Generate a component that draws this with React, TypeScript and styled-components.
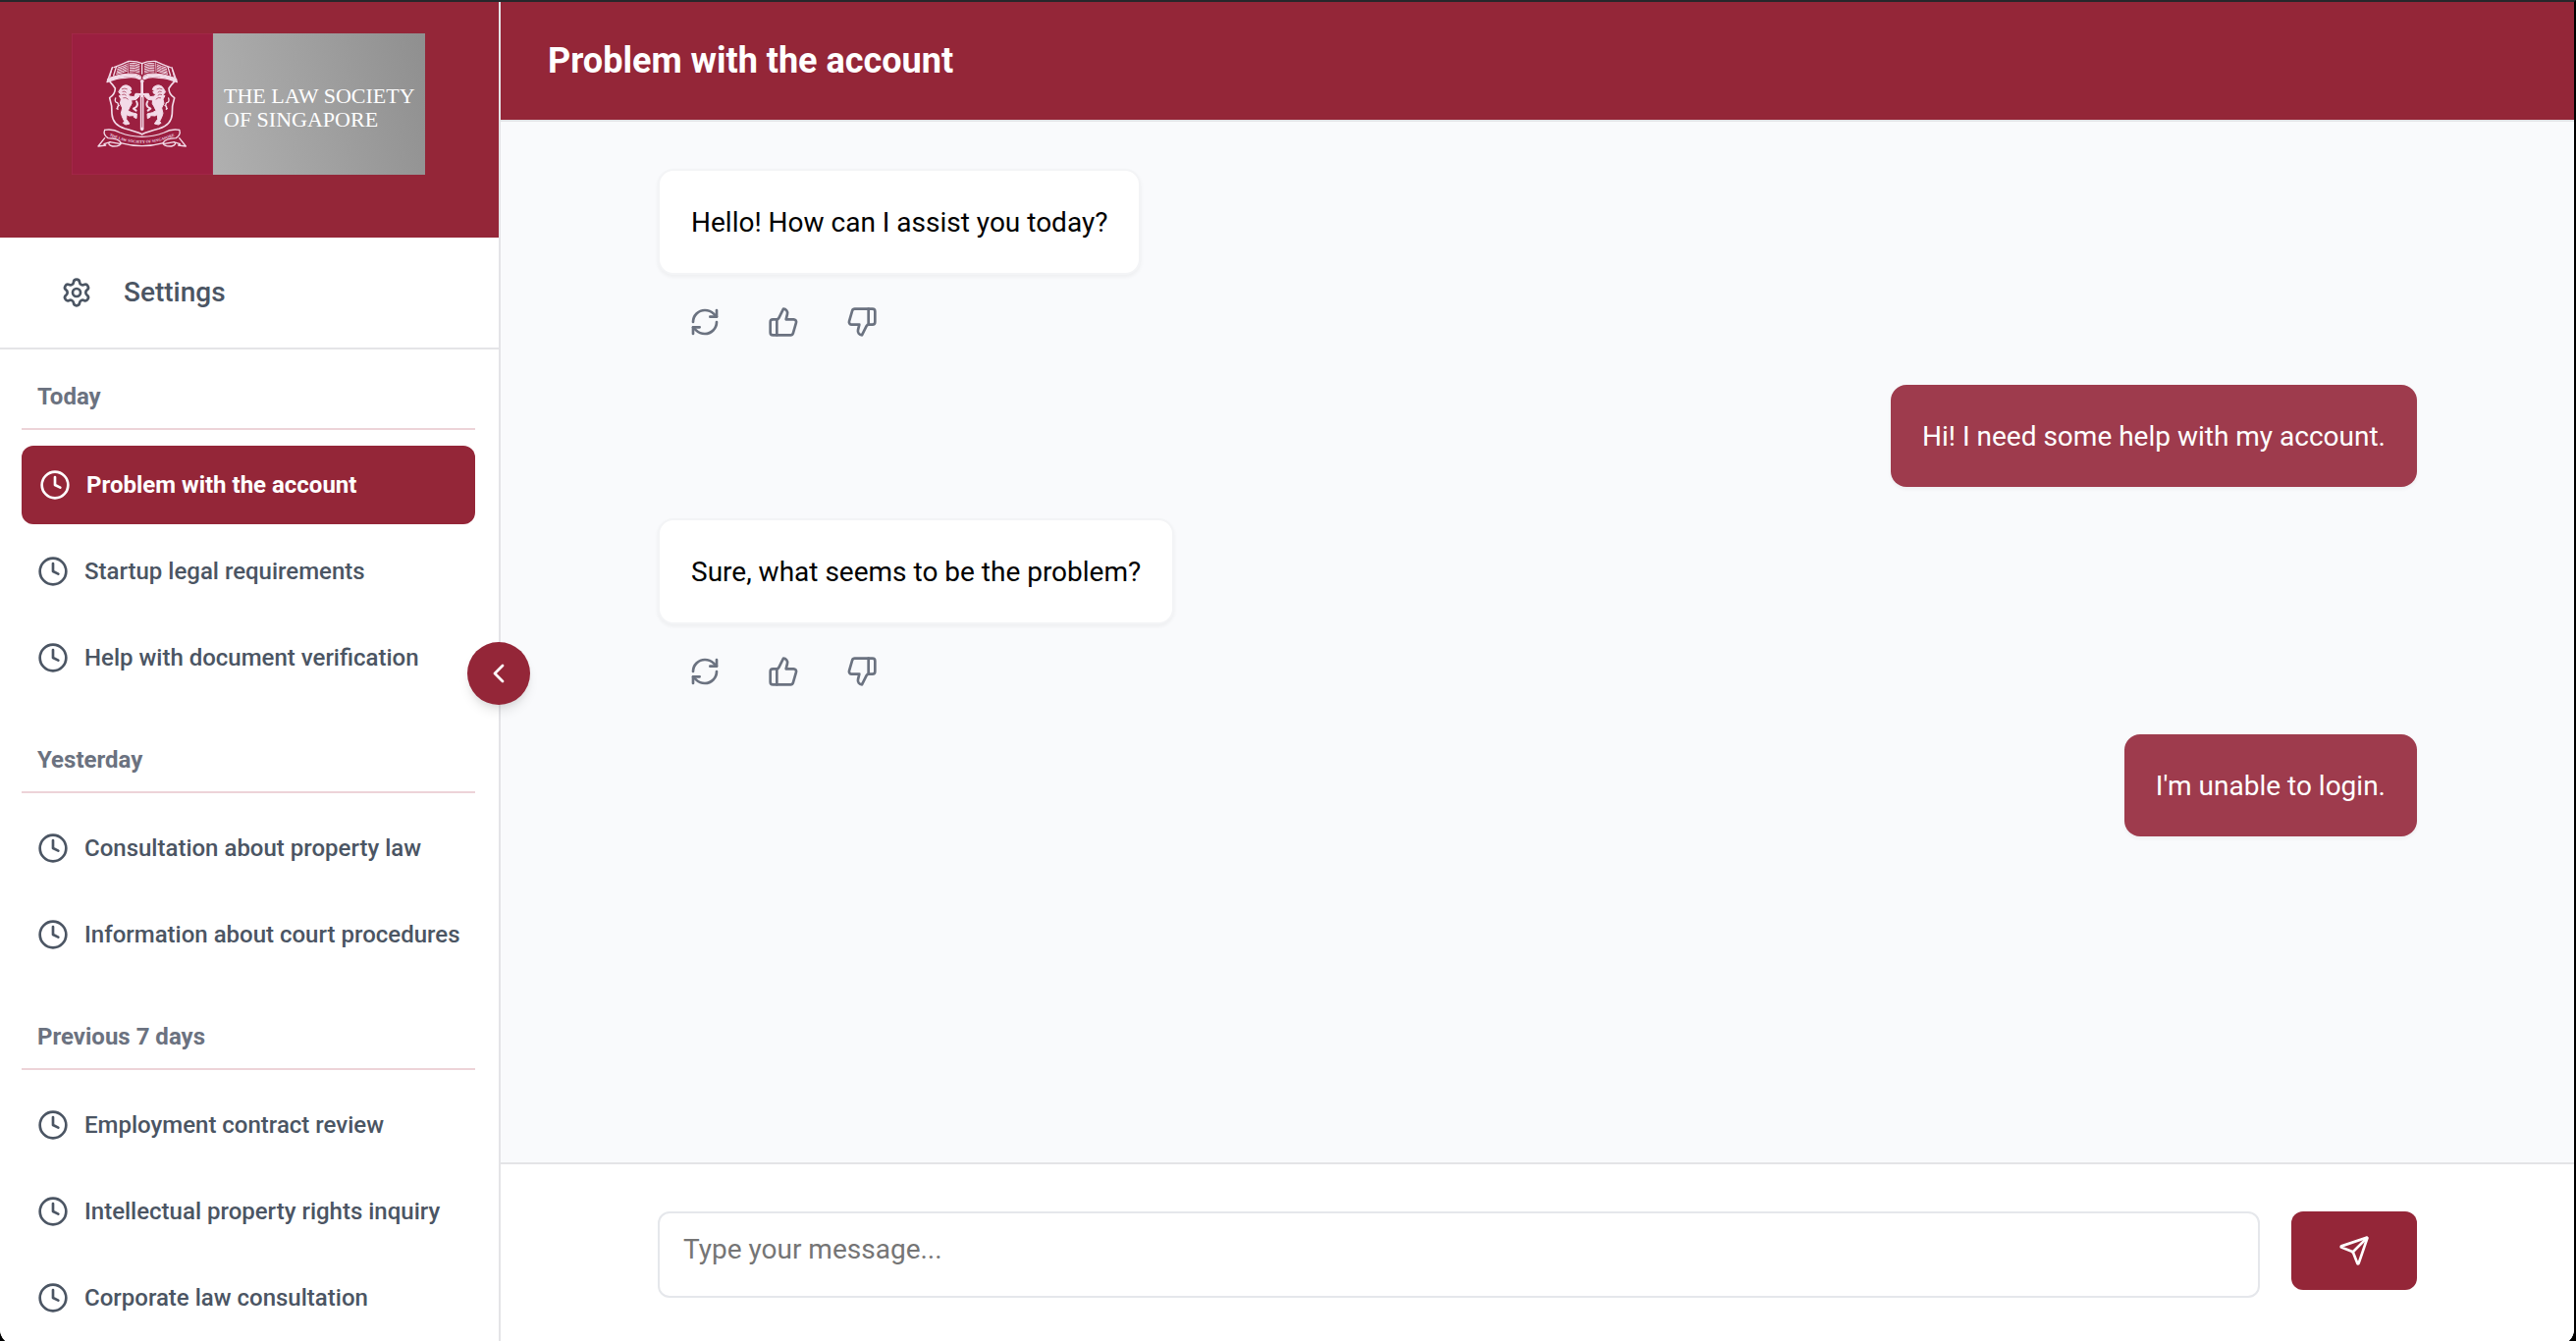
import React, { useState } from "react";
import styled, { createGlobalStyle, css } from "styled-components";
import {
  ChevronLeft,
  Clock,
  RefreshCw,
  Send,
  Settings,
  ThumbsDown,
  ThumbsUp,
} from "lucide-react";

const color = {
  brand: "#942638",
  brandSoft: "#9e3b4d",
  crest: "#9b1f40",
  crestInk: "#f3dbe8",
  line: "#e4e4e7",
  rose: "#edd3d8",
  ink: "#4b5563",
  muted: "#6b7280",
  canvas: "#f9fafc",
};

const GlobalStyle = createGlobalStyle`
  *, *::before, *::after { box-sizing: border-box; }
  html, body { margin: 0; height: 100vh; overflow: hidden; background: #000; }
  body { font-family: Roboto, "Liberation Sans", sans-serif; }
  button, textarea { font: inherit; }
  h1, h2, p, ul { margin: 0; padding: 0; }
`;

const Frame = styled.div`
  height: 100vh;
  overflow: hidden;
  border-top: 2px solid #26272b;
  border-right: 2px solid #000;
`;

const Shell = styled.div`
  display: flex;
  height: calc(100vh + 2px);
  border-radius: 0 0 16px 16px;
  overflow: hidden;
  background: #fff;
`;

const Sidebar = styled.aside`
  position: relative;
  flex: none;
  width: 510px;
  border-right: 2px solid ${color.line};
  background: #fff;
`;

const Brand = styled.div`
  display: flex;
  justify-content: center;
  height: 240px;
  padding: 32px 34px 32px 32px;
  background: ${color.brand};
`;

const Logo = styled.div`
  display: grid;
  grid-template-columns: 144px 216px;
  height: 144px;
`;

const CrestTile = styled.svg`
  display: block;
  width: 144px;
  height: 144px;
  background: ${color.crest};
`;

const Wordmark = styled.div`
  padding: 52px 0 0 11px;
  background: linear-gradient(75deg, #b0b0b0, #a0a0a0 50%, #8f8f8f);
  color: #fff;
  font-family: "Liberation Serif", serif;
  font-size: 22px;
  line-height: 24px;
  white-space: nowrap;
`;

const SettingsButton = styled.button`
  display: flex;
  align-items: center;
  gap: 32px;
  width: 100%;
  height: 114px;
  padding: 0 62px;
  border: 0;
  border-bottom: 2px solid ${color.line};
  background: none;
  color: ${color.ink};
  font-size: 28px;
  font-weight: 500;
  line-height: 40px;
`;

const History = styled.nav`
  display: flex;
  flex-direction: column;
  gap: 32px;
  padding: 0 24px 0 22px;
  margin-top: 16px;
`;

const HistoryHeading = styled.h2`
  padding: 16px;
  border-bottom: 2px solid ${color.rose};
  color: ${color.muted};
  font-size: 24px;
  font-weight: 700;
  line-height: 32px;
`;

const HistoryList = styled.ul`
  display: grid;
  gap: 8px;
  margin-top: 16px;
  list-style: none;
`;

const HistoryItem = styled.button<{ $active: boolean }>`
  display: flex;
  align-items: center;
  gap: 16px;
  width: 100%;
  height: 80px;
  padding: 0 16px;
  border: 0;
  border-radius: 12px;
  background: none;
  color: ${color.ink};
  font-size: 24px;
  font-weight: 500;
  line-height: 32px;
  white-space: nowrap;
  ${(p) =>
    p.$active &&
    css`
      padding: 0 18px;
      background: ${color.brand};
      color: #fff;
      font-weight: 700;
    `}
`;

const Collapse = styled.button`
  position: absolute;
  z-index: 1;
  top: 50%;
  right: -32px;
  display: grid;
  place-items: center;
  width: 64px;
  height: 64px;
  margin-top: -32px;
  padding: 0;
  border: 0;
  border-radius: 50%;
  background: ${color.brand};
  color: #fff;
  box-shadow: 0 8px 12px -2px rgba(0, 0, 0, 0.1), 0 4px 8px -4px rgba(0, 0, 0, 0.1);
`;

const Main = styled.main`
  display: flex;
  flex: 1;
  flex-direction: column;
  min-width: 0;
`;

const TopBar = styled.header`
  display: flex;
  align-items: center;
  height: 122px;
  padding: 0 48px;
  border-bottom: 2px solid ${color.line};
  background: ${color.brand};
  color: #fff;
`;

const Title = styled.h1`
  font-size: 36px;
  font-weight: 700;
  line-height: 48px;
`;

const Conversation = styled.section`
  flex: 1;
  min-height: 0;
  padding: 48px;
  overflow: hidden;
  background: ${color.canvas};
`;

const Thread = styled.div`
  display: flex;
  flex-direction: column;
  gap: 32px;
  max-width: 1792px;
  margin: 0 auto;
`;

const Message = styled.article<{ $mine: boolean }>`
  display: flex;
  flex-direction: column;
  gap: 16px;
  align-items: ${(p) => (p.$mine ? "flex-end" : "flex-start")};
`;

const Bubble = styled.p<{ $mine: boolean }>`
  padding: 33px 32px 31px;
  border: ${(p) => (p.$mine ? "0" : "2px solid #f3f4f6")};
  border-radius: 16px;
  background: ${(p) => (p.$mine ? color.brandSoft : "#fff")};
  color: ${(p) => (p.$mine ? "#fff" : "#000")};
  font-size: 28px;
  line-height: 40px;
  box-shadow: 0 2px 4px rgba(0, 0, 0, 0.05);
`;

const Actions = styled.div`
  display: flex;
  gap: 16px;
  padding-left: 16px;
`;

const ActionButton = styled.button`
  display: grid;
  place-items: center;
  width: 64px;
  height: 64px;
  padding: 0;
  border: 0;
  background: none;
  color: ${color.muted};
`;

const ComposerBar = styled.footer`
  padding: 48px;
  border-top: 2px solid ${color.line};
  background: #fff;
`;

const Composer = styled.form`
  display: flex;
  align-items: flex-start;
  gap: 32px;
  max-width: 1792px;
  margin: 0 auto;
`;

const MessageInput = styled.textarea`
  flex: 1;
  height: 88px;
  padding: 17px 24px 15px;
  border: 2px solid #e5e7eb;
  border-radius: 12px;
  outline: none;
  resize: none;
  overflow: hidden;
  background: #fff;
  color: #000;
  font-size: 28px;
  line-height: 40px;
  &::placeholder { color: #757575; }
`;

const SendButton = styled.button`
  display: grid;
  place-items: center;
  width: 128px;
  height: 80px;
  padding: 0;
  border: 0;
  border-radius: 12px;
  background: ${color.brand};
  color: #fff;
`;

/* Left half of the arms; the right half is its mirror image. */
const CrestHalf = () => (
  <>
    {/* open book */}
    <path d="M163 146 L147 191 Q178 178 202 178 Q230 172 247 182" strokeWidth="4" />
    <path d="M168 146 Q190 138 213 127 Q238 126 254 134" strokeWidth="4" />
    <path d="M163 147 L155 178 Q190 164 220 165 Q240 164 250 172" strokeWidth="3" />
    <path d="M151 184 Q185 171 216 170 Q236 169 248 178" strokeWidth="9" />
    <path d="M175 145 L167 171" strokeWidth="4" />
    <path d="M213 128 L211 164" strokeWidth="2" />
    <path
      d="M180 147 Q196 143 208 137 M179 152 Q196 148 208 142 M178 157 Q195 153 208 147 M177 162 Q195 158 208 152 M176 166 Q194 162 208 157
         M217 134 Q232 131 246 137 M217 139 Q232 136 246 142 M217 144 Q232 141 246 147 M217 149 Q232 146 246 152 M217 154 Q232 151 246 157 M217 159 Q232 156 246 162"
      strokeWidth="3"
    />
    {/* shield edge */}
    <path d="M156 190 Q166 200 172 210 Q172 228 155 239 Q163 262 162 288 Q164 322 202 333 Q236 342 254 350" strokeWidth="5" />
    <path d="M173 240 q-4 12 6 14 q6 8 -2 18 M184 262 q-8 4 -4 12" strokeWidth="4" />
    {/* lion */}
    <path
      fill={color.crestInk}
      strokeWidth="3"
      d="M186 214 Q194 198 209 201 Q221 204 222 214 L216 216 L221 222 Q218 228 211 226 L216 234 L230 236 L234 226 L244 226 L246 234 L236 244 L221 246 Q226 256 217 266 L211 278 L222 284 L238 288 L237 302 L229 298 L229 293 L214 294 L207 290 L206 304 L216 318 L204 321 L196 316 L200 311 L193 296 L190 286 L194 270 L187 256 L190 243 L184 233 L190 230 L183 222 Z"
    />
    <path
      stroke={color.crest}
      d="M193 212 q8 -4 15 0 M195 220 q6 -3 10 2 M194 229 q6 -3 11 2 M197 239 q8 -3 14 4"
      strokeWidth="2"
    />
    <path d="M237 250 Q243 260 236 267 L228 272 L236 278" strokeWidth="6" />
    {/* ribbon tail */}
    <path
      d="M140 337 Q134 352 150 362 Q183 363 190 377 Q188 388 164 387 Q147 382 155 374 L189 380 M140 362 L120 387 L143 384 L138 380 L157 374"
      strokeWidth="4"
    />
  </>
);

const Crest = () => (
  <CrestTile viewBox="39 42 432 432" role="img" aria-label="Law Society crest">
    <rect x="40" y="43" width="430" height="430" fill="none" stroke="#a52a4c" strokeWidth="2" />
    <g fill="none" stroke={color.crestInk} strokeLinecap="round" strokeLinejoin="round">
      <CrestHalf />
      <g transform="translate(508 0) scale(-1 1)">
        <CrestHalf />
      </g>
      {/* sword */}
      <path d="M254 134 V166" strokeWidth="4" />
      <path d="M254 190 V224" strokeWidth="8" />
      <path d="M236 232 Q245 227 254 228 Q263 227 272 232" strokeWidth="7" />
      <path d="M254 234 V334" strokeWidth="11" />
      <path d="M254 238 V328" stroke={color.crest} strokeWidth="2" />
      <circle cx="254" cy="188" r="5" fill={color.crestInk} />
      {/* ribbon */}
      <path d="M140 337 Q166 333 186 345 Q220 358 254 358 Q288 358 322 345 Q342 333 368 337" strokeWidth="4" />
      <path d="M188 377 Q220 386 254 386 Q288 386 320 377" strokeWidth="4" />
    </g>
    <path id="motto" d="M140 349 Q200 378 254 377 Q308 378 368 349" fill="none" />
    <text
      fill={color.crestInk}
      fontFamily="Liberation Serif, serif"
      fontWeight="700"
      fontSize="12"
      textAnchor="middle"
    >
      <textPath href="#motto" startOffset="50%">
        THE LAW SOCIETY OF SINGAPORE
      </textPath>
    </text>
  </CrestTile>
);

const groups = [
  {
    label: "Today",
    items: ["Problem with the account", "Startup legal requirements", "Help with document verification"],
  },
  {
    label: "Yesterday",
    items: ["Consultation about property law", "Information about court procedures"],
  },
  {
    label: "Previous 7 days",
    items: ["Employment contract review", "Intellectual property rights inquiry", "Corporate law consultation"],
  },
];

const messages = [
  { mine: false, text: "Hello! How can I assist you today?" },
  { mine: true, text: "Hi! I need some help with my account." },
  { mine: false, text: "Sure, what seems to be the problem?" },
  { mine: true, text: "I'm unable to login." },
];

export default function App() {
  const [active, setActive] = useState("Problem with the account");
  const [draft, setDraft] = useState("");

  return (
    <>
      <GlobalStyle />
      <Frame>
        <Shell>
          <Sidebar>
            <Brand>
              <Logo>
                <Crest />
                <Wordmark>
                  THE LAW SOCIETY
                  <br />
                  OF SINGAPORE
                </Wordmark>
              </Logo>
            </Brand>
            <SettingsButton type="button">
              <Settings size={32} />
              Settings
            </SettingsButton>
            <History aria-label="Conversations">
              {groups.map((group) => (
                <section key={group.label}>
                  <HistoryHeading>{group.label}</HistoryHeading>
                  <HistoryList>
                    {group.items.map((item) => (
                      <li key={item}>
                        <HistoryItem type="button" $active={item === active} onClick={() => setActive(item)}>
                          <Clock size={32} />
                          {item}
                        </HistoryItem>
                      </li>
                    ))}
                  </HistoryList>
                </section>
              ))}
            </History>
            <Collapse type="button" aria-label="Collapse sidebar">
              <ChevronLeft size={32} />
            </Collapse>
          </Sidebar>
          <Main>
            <TopBar>
              <Title>{active}</Title>
            </TopBar>
            <Conversation>
              <Thread>
                {messages.map((m) => (
                  <Message key={m.text} $mine={m.mine}>
                    <Bubble $mine={m.mine}>{m.text}</Bubble>
                    {!m.mine && (
                      <Actions>
                        <ActionButton type="button" aria-label="Regenerate">
                          <RefreshCw size={32} />
                        </ActionButton>
                        <ActionButton type="button" aria-label="Good response">
                          <ThumbsUp size={32} />
                        </ActionButton>
                        <ActionButton type="button" aria-label="Bad response">
                          <ThumbsDown size={32} />
                        </ActionButton>
                      </Actions>
                    )}
                  </Message>
                ))}
              </Thread>
            </Conversation>
            <ComposerBar>
              <Composer onSubmit={(e) => e.preventDefault()}>
                <MessageInput
                  aria-label="Message"
                  placeholder="Type your message..."
                  value={draft}
                  onChange={(e) => setDraft(e.target.value)}
                />
                <SendButton type="submit" aria-label="Send message">
                  <Send size={32} />
                </SendButton>
              </Composer>
            </ComposerBar>
          </Main>
        </Shell>
      </Frame>
    </>
  );
}
